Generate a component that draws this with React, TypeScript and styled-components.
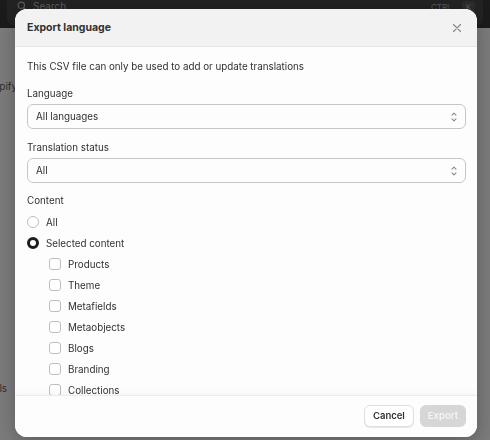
import React from "react";
import styled, { createGlobalStyle } from "styled-components";

const Global = createGlobalStyle`
  html, body { margin: 0; padding: 0; }
  body {
    width: 490px;
    height: 440px;
    overflow: hidden;
    font-family: Inter, "Noto Sans", "Liberation Sans", sans-serif;
    background: #7b7b7b;
  }
  * { box-sizing: border-box; }
`;

const Page = styled.div`
  width: 490px;
  height: 440px;
  display: flex;
  flex-direction: column;
  background: #7b7b7b;
`;

const TopBar = styled.div`
  height: 28px;
  background: #1b1b1b;
  display: flex;
  align-items: flex-start;
  padding: 0 7px;
`;

const SearchBox = styled.div`
  flex: 1;
  height: 26px;
  border-radius: 0 0 8px 8px;
  background: #232323;
  display: flex;
  align-items: flex-start;
  gap: 6px;
  padding: 1px 8px 0 10px;
  color: #5e5e5e;
  font-size: 10px;
  line-height: 10px;
`;

const SearchText = styled.span`
  flex: 1;
`;

const Kbd = styled.span<{ $boxed?: boolean }>`
  font-size: 8px;
  color: #5a5a5a;
  padding: 1px 4px;
  border-radius: 3px;
  background: ${(p) => (p.$boxed ? "#2c2c2c" : "transparent")};
`;

const Backdrop = styled.div`
  flex: 1;
  display: flex;
  flex-direction: column;
  justify-content: space-between;
  padding: 52px 0 46px;
  color: #2e2e2e;
  font-size: 10px;
`;

const Fragment = styled.span<{ $shift: number }>`
  margin-left: ${(p) => p.$shift}px;
`;

const Modal = styled.div`
  position: fixed;
  left: 15px;
  top: 9px;
  width: 462px;
  height: 428px;
  background: #fdfdfd;
  border-radius: 12px;
  overflow: hidden;
  display: flex;
  flex-direction: column;
  box-shadow: 0 4px 18px rgba(0, 0, 0, 0.25);
  color: #303030;
  font-size: 9.8px;
`;

const Header = styled.div`
  height: 38px;
  flex: none;
  display: flex;
  align-items: center;
  justify-content: space-between;
  padding: 0 14px 0 12px;
  background: #f2f2f2;
  border-bottom: 1px solid #e6e6e6;
`;

const Title = styled.h2`
  margin: 0;
  font-size: 10.5px;
  font-weight: 650;
  color: #303030;
`;

const CloseButton = styled.button`
  border: 0;
  background: none;
  padding: 0;
  width: 12px;
  height: 12px;
  display: flex;
  align-items: center;
  justify-content: center;
`;

const Body = styled.div`
  flex: 1;
  overflow: hidden;
  padding: 12px 11px 0 12px;
  display: flex;
  flex-direction: column;
  gap: 11px;
`;

const Line = styled.div`
  line-height: 16px;
`;

const Field = styled.div`
  display: flex;
  flex-direction: column;
  gap: 2px;
`;

const FieldLabel = styled.div`
  line-height: 16px;
`;

const SelectBox = styled.div`
  height: 25px;
  border: 1px solid #c6c6c6;
  border-radius: 6px;
  background: #fdfdfd;
  display: flex;
  align-items: center;
  justify-content: space-between;
  padding: 0 6px 0 8px;
`;

const Group = styled.div`
  display: flex;
  flex-direction: column;
  gap: 5px;
  margin-top: -1px;
`;

const Row = styled.label<{ $indent?: boolean }>`
  display: flex;
  align-items: center;
  gap: 7px;
  height: 16px;
  padding-left: ${(p) => (p.$indent ? "22px" : "0")};
`;

const Radio = styled.span<{ $checked?: boolean }>`
  width: 12px;
  height: 12px;
  border-radius: 50%;
  background: #fff;
  border: ${(p) => (p.$checked ? "3.5px solid #1c1c1c" : "1px solid #bdbdbd")};
  flex: none;
`;

const Check = styled.span`
  width: 12px;
  height: 12px;
  border-radius: 3px;
  background: #fff;
  border: 1px solid #bdbdbd;
  flex: none;
`;

const Footer = styled.div`
  height: 42px;
  flex: none;
  border-top: 1px solid #ececec;
  box-shadow: 0 -3px 6px rgba(0, 0, 0, 0.03);
  display: flex;
  align-items: center;
  justify-content: flex-end;
  gap: 6px;
  padding: 0 11px 2px;
  background: #fdfdfd;
`;

const Button = styled.button<{ $primary?: boolean }>`
  height: 22px;
  min-width: 46px;
  padding: 0 8px;
  border-radius: 6px;
  font-family: inherit;
  font-size: 9.5px;
  font-weight: 600;
  border: ${(p) => (p.$primary ? "0" : "1px solid #dedede")};
  background: ${(p) => (p.$primary ? "#d6d6d6" : "#fff")};
  color: ${(p) => (p.$primary ? "#f4f4f4" : "#303030")};
  box-shadow: ${(p) => (p.$primary ? "none" : "0 1px 0 rgba(0,0,0,0.08)")};
`;

const SelectIcon = () => (
  <svg width="10" height="14" viewBox="0 0 10 14" fill="none">
    <path d="M3 5.2 L5 3.2 L7 5.2" stroke="#8a8a8a" strokeWidth="1.1" strokeLinecap="round" strokeLinejoin="round" />
    <path d="M3 8.8 L5 10.8 L7 8.8" stroke="#8a8a8a" strokeWidth="1.1" strokeLinecap="round" strokeLinejoin="round" />
  </svg>
);

const CloseIcon = () => (
  <svg width="10" height="10" viewBox="0 0 10 10" fill="none">
    <path d="M1.5 1.5 L8.5 8.5 M8.5 1.5 L1.5 8.5" stroke="#8a8a8a" strokeWidth="1.2" strokeLinecap="round" />
  </svg>
);

const SearchIcon = () => (
  <svg width="10" height="10" viewBox="0 0 10 10" fill="none">
    <circle cx="4.3" cy="4.3" r="3.2" stroke="#5e5e5e" strokeWidth="1.1" />
    <path d="M6.7 6.7 L9 9" stroke="#5e5e5e" strokeWidth="1.1" strokeLinecap="round" />
  </svg>
);

const contentItems = [
  "Products",
  "Theme",
  "Metafields",
  "Metaobjects",
  "Blogs",
  "Branding",
  "Collections",
];

export default function App() {
  return (
    <>
      <Global />
      <Page>
        <TopBar>
          <SearchBox>
            <SearchIcon />
            <SearchText>Search</SearchText>
            <Kbd>CTRL</Kbd>
            <Kbd $boxed>K</Kbd>
          </SearchBox>
        </TopBar>
        <Backdrop>
          <Fragment $shift={-19}>Shopify</Fragment>
          <Fragment $shift={-25}>Details</Fragment>
        </Backdrop>
      </Page>
      <Modal>
        <Header>
          <Title>Export language</Title>
          <CloseButton aria-label="Close">
            <CloseIcon />
          </CloseButton>
        </Header>
        <Body>
          <Line>This CSV file can only be used to add or update translations</Line>
          <Field>
            <FieldLabel>Language</FieldLabel>
            <SelectBox>
              <span>All languages</span>
              <SelectIcon />
            </SelectBox>
          </Field>
          <Field>
            <FieldLabel>Translation status</FieldLabel>
            <SelectBox>
              <span>All</span>
              <SelectIcon />
            </SelectBox>
          </Field>
          <Group>
            <FieldLabel>Content</FieldLabel>
            <Row>
              <Radio />
              <span>All</span>
            </Row>
            <Row>
              <Radio $checked />
              <span>Selected content</span>
            </Row>
            {contentItems.map((item) => (
              <Row $indent key={item}>
                <Check />
                <span>{item}</span>
              </Row>
            ))}
          </Group>
        </Body>
        <Footer>
          <Button>Cancel</Button>
          <Button $primary>Export</Button>
        </Footer>
      </Modal>
    </>
  );
}
